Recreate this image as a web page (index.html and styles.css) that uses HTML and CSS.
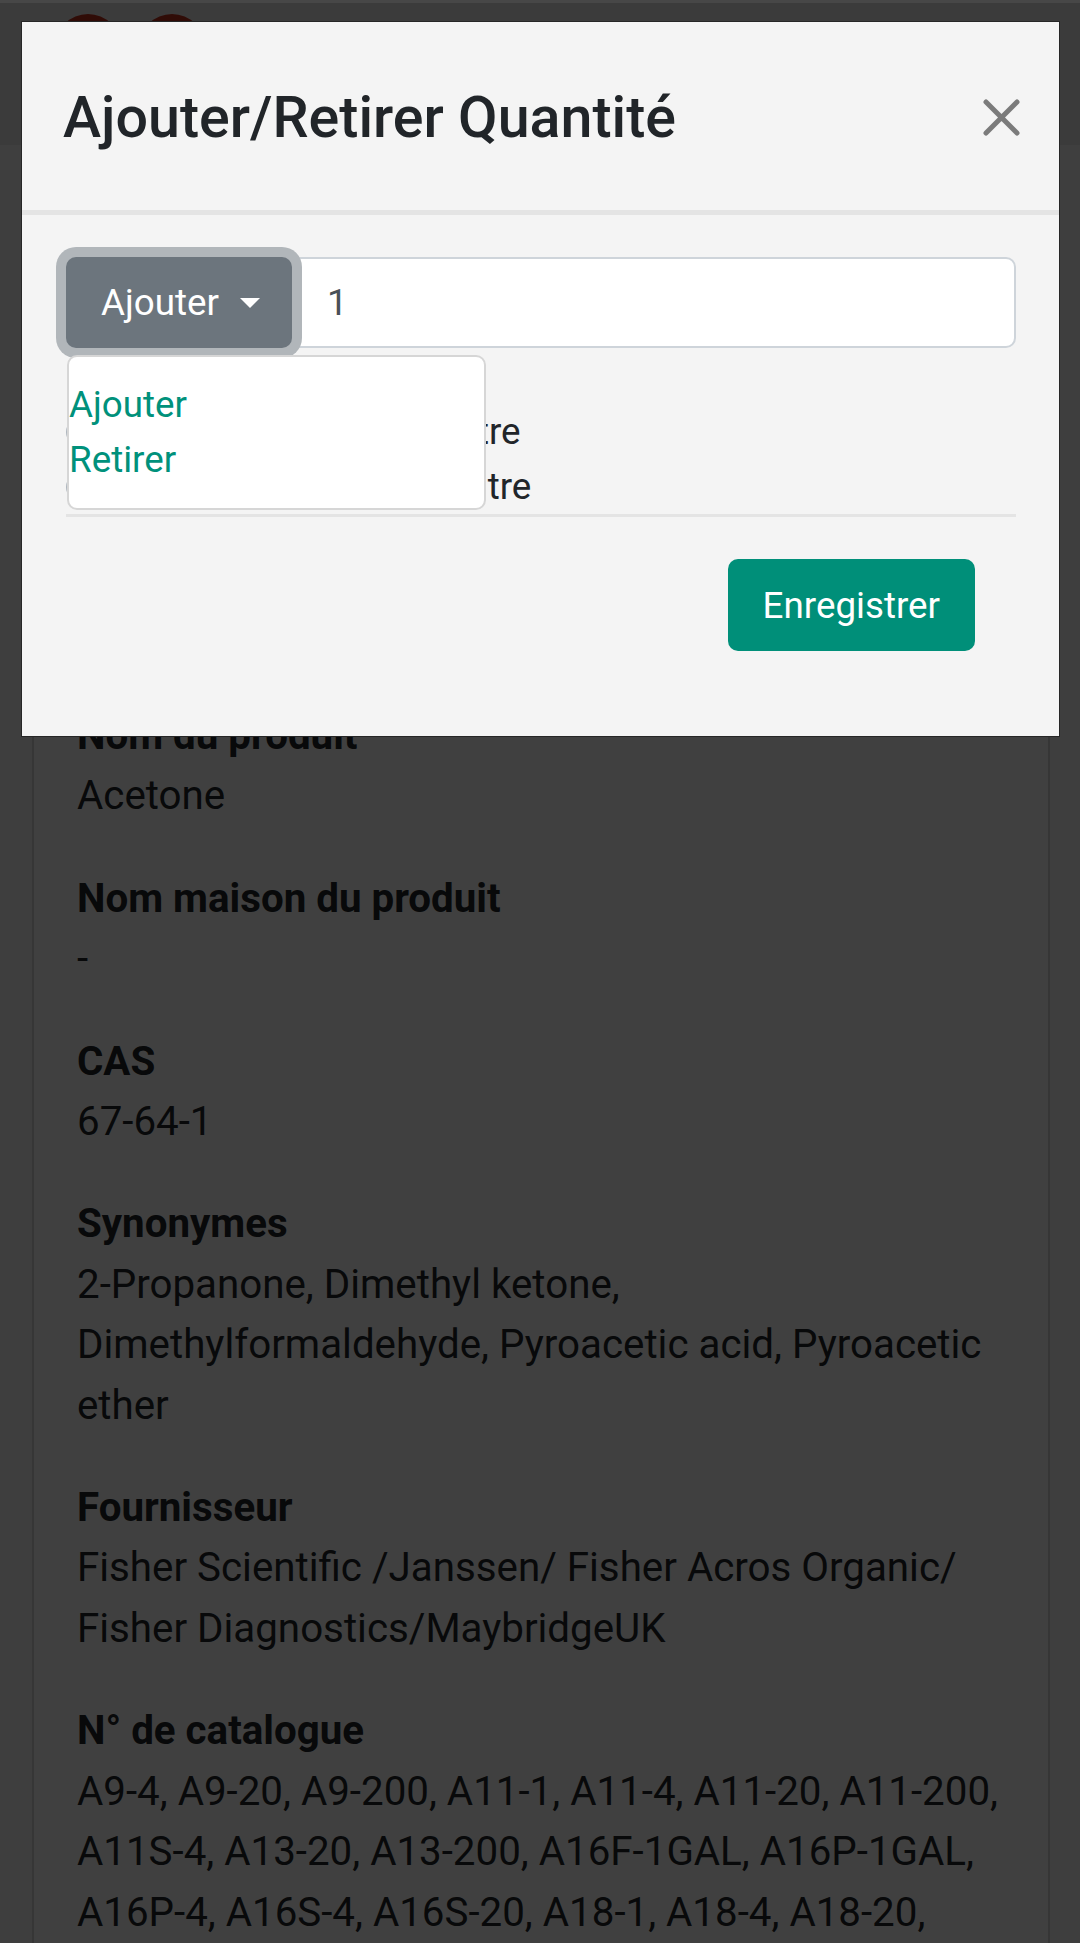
FILE: index.html
```html
<!DOCTYPE html>
<html lang="fr">
<head>
<meta charset="utf-8">
<title>Ajouter/Retirer Quantité</title>
<link rel="stylesheet" href="styles.css">
</head>
<body>
  <header class="topbar">
    <div class="logo"><span class="logo-dot"></span><span class="logo-dot"></span></div>
  </header>
  <nav class="subbar"></nav>

  <main class="page">
    <section class="card">
      <div class="card-top">
        <h2 class="card-title">Acetone</h2>
        <p class="card-sub">Quantité en inventaire</p>
      </div>
      <dl class="fields">
        <dt>Nom du produit</dt>
        <dd>Acetone</dd>
        <dt>Nom maison du produit</dt>
        <dd>-</dd>
        <dt>CAS</dt>
        <dd>67-64-1</dd>
        <dt>Synonymes</dt>
        <dd>2-Propanone, Dimethyl ketone, Dimethylformaldehyde, Pyroacetic acid, Pyroacetic ether</dd>
        <dt>Fournisseur</dt>
        <dd>Fisher Scientific /Janssen/ Fisher Acros Organic/ Fisher Diagnostics/MaybridgeUK</dd>
        <dt>N° de catalogue</dt>
        <dd>A9-4, A9-20, A9-200, A11-1, A11-4, A11-20, A11-200, A11S-4, A13-20, A13-200, A16F-1GAL, A16P-1GAL, A16P-4, A16S-4, A16S-20, A18-1, A18-4, A18-20, A18-200, A18-500, A19-1, A19-4, A929-4</dd>
      </dl>
    </section>
  </main>

  <div class="statusbar"></div>
  <div class="backdrop"></div>

  <div class="modal" role="dialog">
    <div class="modal-header">
      <h5 class="modal-title">Ajouter/Retirer Quantité</h5>
      <button class="close" aria-label="Fermer">
        <svg width="37" height="37" viewBox="0 0 37 37"><path d="M3 3 L34 34 M34 3 L3 34" stroke="#7b7b7b" stroke-width="5" stroke-linecap="round" fill="none"/></svg>
      </button>
    </div>
    <div class="modal-body">
      <div class="input-group">
        <div class="dd">
          <button class="dd-toggle">Ajouter<span class="caret"></span></button>
          <div class="dd-menu">
            <a class="dd-item">Ajouter</a>
            <a class="dd-item">Retirer</a>
          </div>
        </div>
        <input class="qty" type="text" value="1">
      </div>
      <div class="units">
        <label class="radio-row"><span class="radio"></span>Contenant entier en litre</label>
        <label class="radio-row"><span class="radio"></span>Contenant partiel en litre</label>
      </div>
    </div>
    <div class="modal-footer">
      <button class="save">Enregistrer</button>
    </div>
  </div>
</body>
</html>
```

FILE: styles.css
```css
* { box-sizing: border-box; }

html, body {
  margin: 0;
  padding: 0;
}

body {
  width: 1080px;
  height: 1943px;
  overflow: hidden;
  position: relative;
  font-family: Roboto, "Noto Sans", "Liberation Sans", sans-serif;
  color: #212529;
  background: #f6f6f6;
}

/* ---------- underlying page ---------- */
.topbar {
  height: 145px;
  background: #ececec;
  padding: 14px 0 0 55px;
}

.logo {
  display: flex;
  gap: 18px;
}

.logo-dot {
  width: 66px;
  height: 66px;
  border-radius: 50%;
  background: #c0321f;
}

.subbar {
  height: 25px;
  background: #fbfbfb;
}

.page {
  height: 1773px;
  overflow: hidden;
  padding: 0 30px 0 32px;
}

.card {
  background: #ffffff;
  border: 2px solid #d8d8d8;
  padding: 0 43px;
  min-height: 1773px;
}

.card-top {
  height: 534px;
}

.card-title {
  margin: 0;
  padding-top: 40px;
  font-size: 58px;
  font-weight: 500;
}

.card-sub {
  margin: 20px 0 0;
  font-size: 40.3px;
}

.fields {
  margin: 0;
  font-size: 40.3px;
  line-height: 60.4px;
}

.fields dt {
  font-weight: 700;
}

.fields dd {
  margin: 0 0 42px;
}

/* ---------- overlay ---------- */
.statusbar {
  position: fixed;
  top: 0;
  left: 0;
  right: 0;
  height: 3px;
  background: #474747;
  z-index: 20;
}

.backdrop {
  position: fixed;
  inset: 0;
  background: rgba(0, 0, 0, 0.75);
  z-index: 10;
}

/* ---------- modal ---------- */
.modal {
  position: absolute;
  top: 21px;
  left: 21px;
  width: 1039px;
  z-index: 30;
  background: #f4f4f4;
  border: 1px solid #262626;
}

.modal-header {
  height: 193px;
  border-bottom: 5px solid #e4e4e4;
  display: flex;
  align-items: center;
  justify-content: space-between;
  padding: 4px 39px 0 41px;
}

.modal-title {
  margin: 0;
  font-size: 57.4px;
  font-weight: 500;
  line-height: 1.2;
  color: #212529;
}

.close {
  border: 0;
  background: none;
  padding: 0;
  width: 37px;
  height: 37px;
  display: block;
  margin-top: -2px;
}

.close svg { display: block; }

.modal-body {
  padding: 42px 43px 0 44px;
}

.input-group {
  display: flex;
  height: 91px;
}

.dd {
  position: relative;
  z-index: 2;
}

.dd-toggle {
  height: 91px;
  width: 226px;
  padding: 0 35px;
  border: 0;
  border-radius: 10px;
  background: #6c757d;
  color: #ffffff;
  font-family: inherit;
  font-size: 36.75px;
  display: flex;
  align-items: center;
  box-shadow: 0 0 0 10px #b1b6ba;
}

.caret {
  margin-left: 21px;
  width: 0;
  height: 0;
  border-top: 10px solid #ffffff;
  border-left: 10.5px solid transparent;
  border-right: 10.5px solid transparent;
}

.dd-menu {
  position: absolute;
  top: 98px;
  left: 1px;
  width: 419px;
  height: 155px;
  padding: 20px 0 21px;
  background: #ffffff;
  border: 2px solid #d6d6d6;
  border-radius: 10px;
  z-index: 3;
}

.dd-item {
  display: block;
  line-height: 55px;
  font-size: 36.75px;
  color: #00917b;
}

.qty {
  flex: 1;
  min-width: 0;
  height: 91px;
  border: 2px solid #ced4da;
  border-radius: 0 10px 10px 0;
  background: #ffffff;
  padding: 0 0 0 33px;
  font-family: inherit;
  font-size: 36.75px;
  color: #495057;
  outline: none;
}

.units {
  margin-top: 56px;
  border-bottom: 3px solid #e4e4e4;
}

.radio-row {
  display: flex;
  align-items: center;
  line-height: 55px;
  font-size: 36.75px;
  color: #212529;
}

.radio {
  flex: none;
  width: 30px;
  height: 30px;
  margin-right: 34px;
  border: 2px solid #adb5bd;
  border-radius: 50%;
  background: #ffffff;
}

.modal-footer {
  display: flex;
  justify-content: flex-end;
  padding: 42px 84px 85px 0;
}

.save {
  height: 92px;
  padding: 0 35px;
  border: 0;
  border-radius: 10px;
  background: #008f79;
  color: #ffffff;
  font-family: inherit;
  font-size: 36.75px;
}
```
